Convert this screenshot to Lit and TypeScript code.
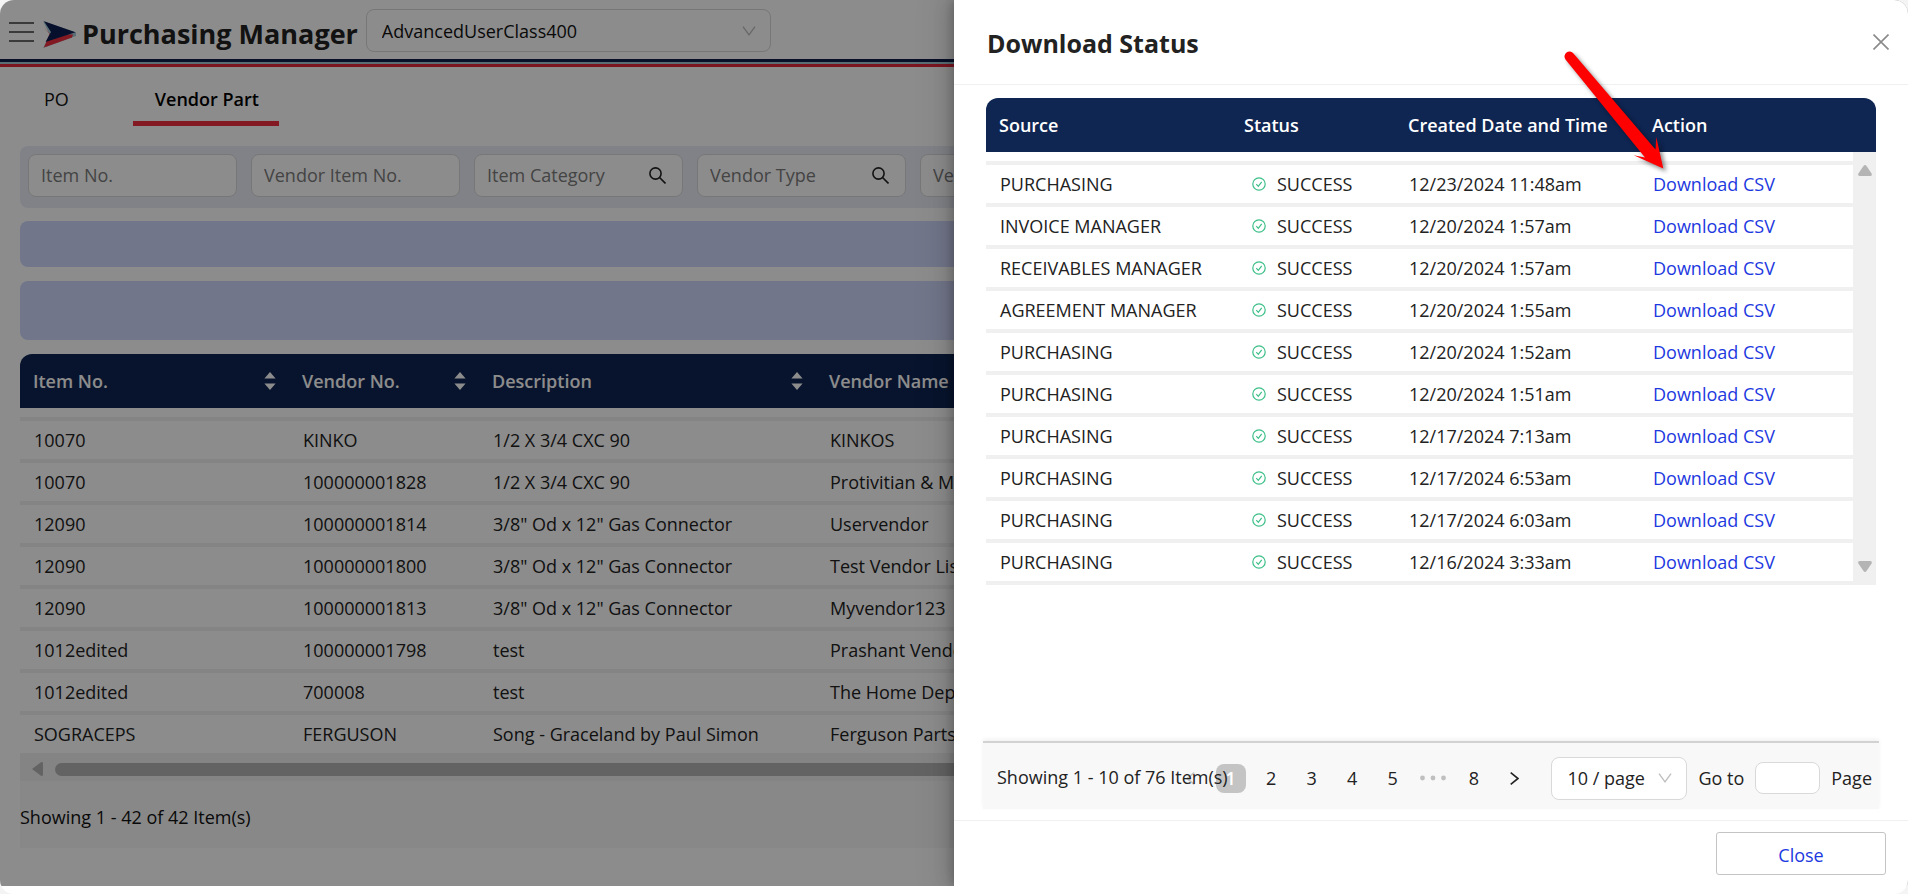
import { LitElement, html, css, svg } from "lit";
import { customElement } from "lit/decorators.js";

interface Download {
  source: string;
  created: string;
}

const downloads: Download[] = [
  { source: "PURCHASING", created: "12/23/2024 11:48am" },
  { source: "INVOICE MANAGER", created: "12/20/2024 1:57am" },
  { source: "RECEIVABLES MANAGER", created: "12/20/2024 1:57am" },
  { source: "AGREEMENT MANAGER", created: "12/20/2024 1:55am" },
  { source: "PURCHASING", created: "12/20/2024 1:52am" },
  { source: "PURCHASING", created: "12/20/2024 1:51am" },
  { source: "PURCHASING", created: "12/17/2024 7:13am" },
  { source: "PURCHASING", created: "12/17/2024 6:53am" },
  { source: "PURCHASING", created: "12/17/2024 6:03am" },
  { source: "PURCHASING", created: "12/16/2024 3:33am" },
];

const parts: string[][] = [
  ["10070", "KINKO", "1/2 X 3/4 CXC 90", "KINKOS"],
  ["10070", "100000001828", "1/2 X 3/4 CXC 90", "Protivitian & M"],
  ["12090", "100000001814", '3/8" Od x 12" Gas Connector', "Uservendor"],
  ["12090", "100000001800", '3/8" Od x 12" Gas Connector', "Test Vendor List"],
  ["12090", "100000001813", '3/8" Od x 12" Gas Connector', "Myvendor123"],
  ["1012edited", "100000001798", "test", "Prashant Vendor"],
  ["1012edited", "700008", "test", "The Home Depot"],
  ["SOGRACEPS", "FERGUSON", "Song - Graceland by Paul Simon", "Ferguson Parts"],
];

const filters = [
  { label: "Item No.", search: false },
  { label: "Vendor Item No.", search: false },
  { label: "Item Category", search: true },
  { label: "Vendor Type", search: true },
  { label: "Vendor", search: false },
];

const shared = css`
  * {
    box-sizing: border-box;
  }
  button,
  input,
  select {
    font: inherit;
    color: inherit;
    margin: 0;
  }
  button {
    background: none;
    border: 0;
    padding: 0;
    cursor: pointer;
  }
  svg {
    display: block;
    flex: none;
  }
  table {
    border-spacing: 0;
    table-layout: fixed;
    text-align: left;
    white-space: nowrap;
  }
  th {
    height: 54px;
    padding: 0 13px;
    background: #0f2552;
    color: #fff;
    font-weight: 600;
  }
  td {
    height: 42px;
    padding: 0 14px;
    border-bottom: 4px solid #f0f0f0;
    color: #222;
  }
  .spacer td {
    height: 13px;
    padding: 0;
  }
  .picker {
    position: relative;
    display: flex;
    align-items: center;
  }
  .picker select {
    appearance: none;
    width: 100%;
    height: 43px;
    padding: 0 15px;
    border: 1px solid #d9d9d9;
    border-radius: 8px;
    background: #fff;
  }
  .picker svg {
    position: absolute;
    right: 15px;
    pointer-events: none;
  }
`;

const chevronDown = svg`<svg width="14" height="10" viewBox="0 0 14 10" fill="none" stroke="#bfbfbf" stroke-width="1.4"><path d="M1 .7 7 8.8 13 .7"/></svg>`;

@customElement("vendor-page")
export class VendorPage extends LitElement {
  static styles = [
    shared,
    css`
      :host {
        display: block;
        height: 100%;
        background: #fff;
      }
      .bar {
        display: flex;
        align-items: center;
        height: 59px;
        padding: 0 9px 7px;
      }
      .menu {
        display: grid;
        gap: 7px;
        width: 25px;
        margin: 11px 9px 0 0;
      }
      .menu i {
        height: 2px;
        background: #6a6a6a;
      }
      .logo {
        margin-top: 18px;
      }
      h1 {
        margin: 16px 8px 0 6px;
        font-size: 27px;
        line-height: 34px;
        font-weight: 700;
        color: #222;
        white-space: nowrap;
      }
      .bar .picker {
        width: 405px;
        margin-top: 9px;
      }
      .stripes {
        height: 8px;
        background: linear-gradient(#0f1e4c 0 3px, #a3cbd5 3px 5px, #e0293c 5px 8px);
      }
      .tabs {
        display: flex;
        height: 59px;
        padding-left: 20px;
        color: #111;
      }
      .tabs button {
        padding: 5px 24px 0;
      }
      .tabs button + button {
        margin-left: 40px;
      }
      .tabs .active {
        padding: 10px 20px 0 22px;
        border-bottom: 5px solid #ee2f3f;
        font-weight: 600;
        color: #000;
      }
      .content {
        padding: 20px 20px 0;
      }
      .filters {
        display: flex;
        gap: 14px;
        height: 62px;
        padding: 8px;
        border-radius: 8px;
        background: #e9edf6;
        overflow: hidden;
      }
      .filters label {
        position: relative;
        flex: 0 0 209px;
      }
      .filters input {
        width: 100%;
        height: 43px;
        padding: 0 12px 2px;
        border: 1px solid #d9d9d9;
        border-radius: 8px;
        background: #fff;
      }
      .filters input::placeholder {
        color: #7c7c7c;
        opacity: 1;
      }
      .filters svg {
        position: absolute;
        right: 17px;
        top: 13px;
      }
      .band {
        height: 46px;
        margin-top: 13px;
        border-radius: 8px;
        background: #cfd8fc;
      }
      .band.tall {
        height: 59px;
        margin: 14px 0;
      }
      .grid {
        overflow: hidden;
        border-radius: 12px 12px 0 0;
      }
      .grid table {
        width: 2136px;
      }
      .c1 {
        width: 269px;
      }
      .c2 {
        width: 190px;
      }
      .c3 {
        width: 337px;
      }
      .head {
        display: flex;
        align-items: center;
        justify-content: space-between;
      }
      .scroll {
        display: flex;
        align-items: center;
        gap: 12px;
        height: 28px;
        margin-top: -4px;
        padding: 4px 12px 0;
        background: #f0f0f0;
        position: relative;
      }
      .thumb {
        flex: 1;
        height: 13px;
        border-radius: 7px;
        background: #b4b4b4;
      }
      .count {
        height: 67px;
        padding-top: 5px;
        display: flex;
        align-items: center;
        background: #f8f8f8;
      }
    `,
  ];

  private sortIcon = svg`<svg width="12" height="18" viewBox="0 0 12 18" fill="#fff"><path d="M6 0 11.6 6.6H.4zM6 18 .4 11.4h11.2z"/></svg>`;

  render() {
    return html`
      <header>
        <div class="bar">
          <button class="menu" aria-label="Menu"><i></i><i></i><i></i></button>
          <svg class="logo" width="33" height="28" viewBox="0 0 33 28">
            <path d="M0 0 33 11.500v3.500L0 27l7-13z" fill="#a3cbd5" />
            <path d="M.5 5.500 7 13 30 13.500 29 16.500 1 26.500 6.500 13z" fill="#ee2f3f" />
            <path d="M1 .3 32.500 11.200 2.500 21 8 11z" fill="#0b1c50" />
          </svg>
          <h1>Purchasing Manager</h1>
          <div class="picker">
            <select aria-label="User class">
              <option>AdvancedUserClass400</option>
            </select>
            ${chevronDown}
          </div>
        </div>
        <div class="stripes"></div>
      </header>
      <nav class="tabs">
        <button>PO</button>
        <button class="active">Vendor Part</button>
      </nav>
      <div class="content">
        <div class="filters">
          ${filters.map(
            (f) => html`<label>
              <input type="text" placeholder=${f.label} aria-label=${f.label} />
              ${f.search
                ? html`<svg width="17" height="17" viewBox="0 0 17 17" fill="none" stroke="#222" stroke-width="1.6">
                    <circle cx="6.5" cy="6.5" r="5.6" />
                    <path d="m10.5 10.5 6 6" />
                  </svg>`
                : ""}
            </label>`
          )}
        </div>
        <div class="band"></div>
        <div class="band tall"></div>
        <div class="grid">
          <table>
            <thead>
              <tr>
                <th class="c1"><div class="head">Item No. ${this.sortIcon}</div></th>
                <th class="c2"><div class="head">Vendor No. ${this.sortIcon}</div></th>
                <th class="c3"><div class="head">Description ${this.sortIcon}</div></th>
                <th>Vendor Name</th>
              </tr>
            </thead>
            <tbody>
              <tr class="spacer"><td colspan="4"></td></tr>
              ${parts.map((row) => html`<tr>${row.map((cell) => html`<td>${cell}</td>`)}</tr>`)}
            </tbody>
          </table>
        </div>
        <div class="scroll">
          <svg width="11" height="14" viewBox="0 0 11 14" fill="#b4b4b4"><path d="M0 7 9 .3Q11-.5 11 1.500V12.500Q11 14.500 9 13.700z" /></svg>
          <div class="thumb"></div>
        </div>
        <div class="count">Showing 1 - 42 of 42 Item(s)</div>
      </div>
    `;
  }
}

@customElement("download-drawer")
export class DownloadDrawer extends LitElement {
  static styles = [
    shared,
    css`
      :host {
        display: flex;
        flex-direction: column;
        background: #fff;
      }
      header {
        display: flex;
        align-items: center;
        justify-content: space-between;
        height: 85px;
        padding: 0 19px 0 33px;
        border-bottom: 1px solid #f0f0f0;
      }
      h2 {
        margin: 2px 0 0;
        font-size: 25px;
        line-height: 34px;
        font-weight: 700;
        color: #222;
      }
      .body {
        flex: 1;
        display: flex;
        flex-direction: column;
        justify-content: space-between;
        padding: 13px 29px 11px;
      }
      .grid {
        display: flex;
        margin: 0 3px;
        border-radius: 12px 12px 0 0;
        overflow: hidden;
      }
      table {
        flex: 1;
      }
      .c1 {
        width: 245px;
      }
      .c2 {
        width: 164px;
      }
      .c3 {
        width: 244px;
      }
      .state {
        display: flex;
        align-items: center;
        gap: 11px;
        padding-left: 7px;
      }
      .link {
        color: #1d39e0;
        text-decoration: none;
      }
      .scroll {
        flex: 0 0 23px;
        display: flex;
        flex-direction: column;
        align-items: center;
        justify-content: space-between;
        border-top: 54px solid #0f2552;
        padding: 13px 0 13px;
        background: #f0f0f0;
      }
      .pager {
        display: flex;
        align-items: center;
        height: 68px;
        padding: 4px 7px 0 14px;
        border-top: 2px solid #d2d2d2;
        background: #f8f8f8;
        box-shadow: 0 -2px 4px rgba(0, 0, 0, 0.06);
        white-space: nowrap;
        color: #222;
      }
      .summary {
        flex: 0 0 178px;
        width: 178px;
        padding-bottom: 3px;
        position: relative;
        z-index: 1;
      }
      .pages {
        flex: 1;
        display: flex;
        align-items: center;
        justify-content: space-between;
        margin-right: 22px;
      }
      .pages button {
        display: grid;
        place-items: center;
        width: 30px;
        height: 29px;
        border-radius: 8px;
      }
      .pages .current {
        background: #c4c4c4;
        color: #fff;
        font-weight: 600;
      }
      .size {
        width: 136px;
        margin-right: 11px;
      }
      .jump {
        display: flex;
        align-items: center;
        gap: 11px;
      }
      .jump input {
        width: 65px;
        height: 32px;
        padding: 0 8px;
        border: 1px solid #d9d9d9;
        border-radius: 8px;
        background: #fff;
      }
      footer {
        display: flex;
        justify-content: flex-end;
        padding: 11px 22px;
        border-top: 1px solid #f0f0f0;
      }
      .close {
        width: 170px;
        height: 43px;
        padding-top: 2px;
        border: 1px solid #c4c4c4;
        border-radius: 3px;
        color: #1d39e0;
      }
      .pointer {
        position: absolute;
        top: 46px;
        right: 230px;
        pointer-events: none;
        filter: drop-shadow(3px 3px 2px rgba(0, 0, 0, 0.45));
      }
    `,
  ];

  private successIcon = svg`<svg width="14" height="14" viewBox="0 0 14 14" fill="none" stroke="#3cbf88" stroke-width="1.2"><circle cx="7" cy="7" r="6.2"/><path d="M4.300 7.200 6.300 9.300 9.700 4.800"/></svg>`;

  render() {
    return html`
      <header>
        <h2>Download Status</h2>
        <button aria-label="Close panel">
          <svg width="16" height="16" viewBox="0 0 16 16" stroke="#8a8a8a" stroke-width="1.6"><path d="m.5.5 15 15M15.500.5.5 15.500" /></svg>
        </button>
      </header>
      <div class="body">
        <div class="grid">
          <table>
            <thead>
              <tr>
                <th class="c1">Source</th>
                <th class="c2">Status</th>
                <th class="c3">Created Date and Time</th>
                <th>Action</th>
              </tr>
            </thead>
            <tbody>
              <tr class="spacer"><td colspan="4"></td></tr>
              ${downloads.map(
                (d) => html`<tr>
                  <td>${d.source}</td>
                  <td><div class="state">${this.successIcon} SUCCESS</div></td>
                  <td>${d.created}</td>
                  <td><a class="link" href="#">Download CSV</a></td>
                </tr>`
              )}
            </tbody>
          </table>
          <div class="scroll">
            <svg width="14" height="11" viewBox="0 0 14 11" fill="#b4b4b4"><path d="M5.500 1Q7-.8 8.500 1L13.600 8.500Q14.500 11 12 11H2Q-.5 11 .4 8.500z" /></svg>
            <svg width="14" height="11" viewBox="0 0 14 11" fill="#b4b4b4"><path d="M5.500 10Q7 11.800 8.500 10L13.600 2.500Q14.500 0 12 0H2Q-.5 0 .4 2.500z" /></svg>
          </div>
        </div>
        <div class="pager">
          <span class="summary">Showing 1 - 10 of 76 Item(s)</span>
          <div class="pages">
            <button aria-label="Previous page">
              <svg width="9" height="13" viewBox="0 0 9 13" fill="none" stroke="#c4c4c4" stroke-width="1.6"><path d="M8.300.7 1 6.500l7.300 5.800" /></svg>
            </button>
            <button class="current">1</button>
            <button>2</button>
            <button>3</button>
            <button>4</button>
            <button>5</button>
            <button aria-label="More pages">
              <svg width="26" height="6" viewBox="0 0 26 6" fill="#bfbfbf"><circle cx="2.500" cy="3" r="2.400" /><circle cx="13" cy="3" r="2.400" /><circle cx="23.500" cy="3" r="2.400" /></svg>
            </button>
            <button>8</button>
            <button aria-label="Next page">
              <svg width="9" height="13" viewBox="0 0 9 13" fill="none" stroke="#222" stroke-width="1.6"><path d="M.7.7 8 6.500.7 12.300" /></svg>
            </button>
          </div>
          <div class="picker size">
            <select aria-label="Page size">
              <option>10 / page</option>
            </select>
            ${chevronDown}
          </div>
          <div class="jump">
            <label for="jump">Go to</label>
            <input id="jump" type="text" />
            <span>Page</span>
          </div>
        </div>
      </div>
      <footer><button class="close">Close</button></footer>
      <svg class="pointer" width="120" height="130" viewBox="0 0 120 130" fill="#f00">
        <path d="M7.500 13.500A5 5 0 0 1 15.500 7.500L97.500 103.500 98.300 91 105.300 122.500 75.700 109.300 87 111.500z" />
      </svg>
    `;
  }
}

@customElement("app-root")
export class AppRoot extends LitElement {
  static styles = css`
    :host {
      display: block;
      height: 100vh;
      background: #f4f4f4;
      font: 400 18px/24px "Open Sans", "Noto Sans", sans-serif;
      color: #111;
    }
    .frame {
      height: 100%;
      padding-bottom: 8px;
      border-radius: 14px;
      background: #fff;
      overflow: hidden;
      box-sizing: border-box;
    }
    .screen {
      position: relative;
      height: 100%;
      overflow: hidden;
    }
    .backdrop {
      position: absolute;
      inset: 0;
      background: rgba(0, 0, 0, 0.45);
    }
    download-drawer {
      position: absolute;
      inset: 0 0 0 50%;
      box-shadow: -6px 0 16px rgba(0, 0, 0, 0.12), -3px 0 6px rgba(0, 0, 0, 0.12), -9px 0 28px 8px rgba(0, 0, 0, 0.06);
    }
  `;

  render() {
    return html`
      <div class="frame">
        <div class="screen">
          <vendor-page></vendor-page>
          <div class="backdrop"></div>
          <download-drawer></download-drawer>
        </div>
      </div>
    `;
  }
}
